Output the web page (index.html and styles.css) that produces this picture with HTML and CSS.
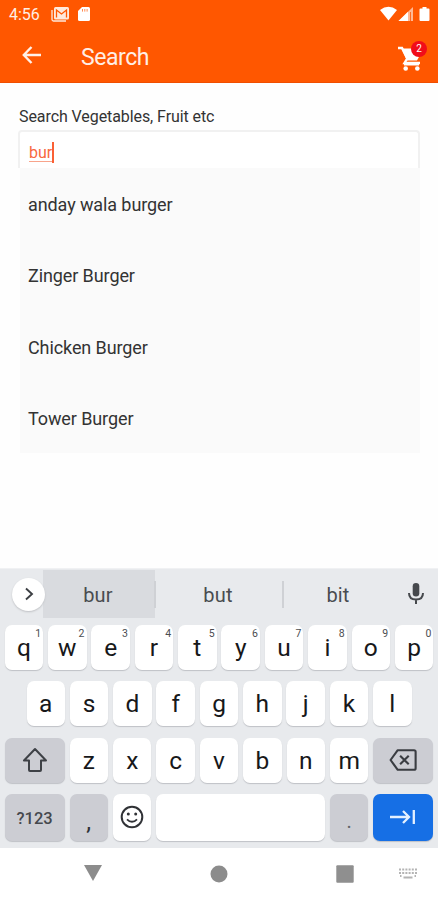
FILE: index.html
```html
<!DOCTYPE html>
<html lang="en">
<head>
<meta charset="utf-8">
<title>Search</title>
<link rel="stylesheet" href="styles.css">
</head>
<body>
<div class="screen">
  <header class="top">
    <div class="status">
      <span class="clock">4:56</span>
      <svg class="i-mail" width="18" height="15" viewBox="0 0 18 15"><path d="M1 3v9.500q0 1.500 1.500 1.500H15" fill="none" stroke="#ffe9dc" stroke-width="1.300"/><rect x="3" y="0" width="15" height="12.500" rx="1.500" fill="#ffe9dc"/><path d="M5.500 10.500V3l5 4 5-4v7.500" fill="none" stroke="#ff5700" stroke-width="1.300"/></svg>
      <svg class="i-sd" width="12" height="14" viewBox="0 0 12 14"><path d="M4 0h6.500Q12 0 12 1.500v11q0 1.500-1.500 1.500h-9Q0 14 0 12.500V4z" fill="#fff"/><path d="M4.500 2v2.600M6.800 2v2.600M9.100 2v2.600" stroke="#ff8a50" stroke-width="1"/></svg>
      <svg class="i-net" width="50" height="16" viewBox="0 0 50 16"><path d="M0 4Q8.500-2.500 17 4L8.500 14.500z" fill="#fff"/><path d="M18.500 15L33 1v14z" fill="#ffb895"/><path d="M18.500 15L28 5.700V15z" fill="#fff"/><path d="M30.500 6v9" stroke="#ff6a20"/><path d="M42.500 1h4v1.500h2q1 0 1 1V14q0 1-1 1h-8q-1 0-1-1V3.500q0-1 1-1h2z" fill="#fff"/></svg>
    </div>
    <div class="bar">
      <svg class="back" width="20" height="18" viewBox="0 0 20 18"><path d="M19 9H2M9.500 1L1.800 9l7.700 8" fill="none" stroke="#fff0e8" stroke-width="2.400"/></svg>
      <h1>Search</h1>
      <div class="cart">
        <svg width="24" height="26" viewBox="0 0 24 26"><path d="M0 2h4l5.200 10.500L6.500 17H22" fill="none" stroke="#fff" stroke-width="2.400"/><path d="M3.500 2.500h12L22 9l-3 5.500H9z" fill="#fff"/><path d="M6 17.500h15v2H6z" fill="#fff"/><circle cx="7.700" cy="22.500" r="2.300" fill="#fff"/><circle cx="19.300" cy="22.500" r="2.300" fill="#fff"/></svg>
        <span class="badge">2</span>
      </div>
    </div>
  </header>

  <main>
    <label>Search Vegetables, Fruit etc</label>
    <div class="field"><span class="typed">bur</span><i class="caret"></i></div>
    <ul class="list">
      <li>anday wala burger</li>
      <li>Zinger Burger</li>
      <li>Chicken Burger</li>
      <li>Tower Burger</li>
    </ul>
  </main>

  <section class="keyboard">
    <div class="suggest">
      <span class="more"><svg width="10" height="14" viewBox="0 0 10 14"><path d="M2 1.500L8 7l-6 5.500" fill="none" stroke="#3c3f43" stroke-width="1.900"/></svg></span>
      <span class="word picked">bur</span>
      <span class="word">but</span>
      <span class="word last">bit</span>
      <svg class="mic" width="16" height="22" viewBox="0 0 16 22"><rect x="4.700" y="0" width="6.600" height="13.500" rx="3.300" fill="#46494d"/><path d="M1 10q0 6.500 7 6.500T15 10M8 16.500V21" fill="none" stroke="#46494d" stroke-width="2"/></svg>
    </div>
    <div class="row">
      <span class="key">q<sup>1</sup></span><span class="key">w<sup>2</sup></span><span class="key">e<sup>3</sup></span><span class="key">r<sup>4</sup></span><span class="key">t<sup>5</sup></span><span class="key">y<sup>6</sup></span><span class="key">u<sup>7</sup></span><span class="key">i<sup>8</sup></span><span class="key">o<sup>9</sup></span><span class="key">p<sup>0</sup></span>
    </div>
    <div class="row inset">
      <span class="key">a</span><span class="key">s</span><span class="key">d</span><span class="key">f</span><span class="key">g</span><span class="key">h</span><span class="key">j</span><span class="key">k</span><span class="key">l</span>
    </div>
    <div class="row">
      <span class="key wide gray"><svg width="26" height="26" viewBox="0 0 26 26"><path d="M13 2L2 13.500h5V23q0 1 1 1h10q1 0 1-1v-9.500h5z" fill="none" stroke="#3e4146" stroke-width="2" stroke-linejoin="round"/></svg></span><span class="key">z</span><span class="key">x</span><span class="key">c</span><span class="key">v</span><span class="key">b</span><span class="key">n</span><span class="key">m</span><span class="key wide gray"><svg class="del" width="28" height="22" viewBox="0 0 29 23"><path d="M9 1.300h17q1.700 0 1.700 1.700v17q0 1.700-1.700 1.700H9L1.500 11.500z" fill="none" stroke="#3a3d42" stroke-width="2.200" stroke-linejoin="round"/><path d="M11.500 7l9 9M20.500 7l-9 9" stroke="#3a3d42" stroke-width="2.200"/></svg></span>
    </div>
    <div class="row">
      <span class="key wide gray sym">?123</span><span class="key gray comma">,</span><span class="key"><svg class="face" width="24" height="24" viewBox="0 0 24 24"><circle cx="12" cy="12" r="10.300" fill="none" stroke="#303236" stroke-width="2"/><circle cx="8.300" cy="9" r="1.500" fill="#303236"/><circle cx="15.700" cy="9" r="1.500" fill="#303236"/><path d="M7 14.300q5 5 10 0" fill="none" stroke="#303236" stroke-width="1.800"/></svg></span><span class="key space"></span><span class="key gray dot">.</span><span class="key wide enter"><svg width="26" height="16" viewBox="0 0 26 16"><path d="M0 8h18M13 2l6 6-6 6M23.800 1v14" fill="none" stroke="#e4f0ff" stroke-width="2.300"/></svg></span>
    </div>
  </section>

  <nav>
    <svg width="18" height="16" viewBox="0 0 18 16"><path d="M0 0h18L9 16z" fill="#8c8c8c"/></svg>
    <svg width="18" height="18" viewBox="0 0 18 18"><circle cx="9" cy="9" r="8.500" fill="#8c8c8c"/></svg>
    <svg width="18" height="18" viewBox="0 0 18 18"><rect x=".3" y=".3" width="17.400" height="17.400" rx="1" fill="#8f8f8f"/></svg>
    <svg width="18" height="12" viewBox="0 0 18 12"><path d="M0 1.500h18M0 5h18" stroke="#b4b4b4" stroke-width="2" stroke-dasharray="2 1.200"/><path d="M1 8h1.500M4.500 9.500h9M15.500 8H17" stroke="#b4b4b4" stroke-width="2"/></svg>
  </nav>
</div>
</body>
</html>
```

FILE: styles.css
```css
* { box-sizing: border-box; }
body { margin: 0; background: #fefefe; font-family: Roboto, sans-serif; color: #333; }
svg { display: block; flex: none; }
.screen { width: 438px; height: 900px; display: flex; flex-direction: column; overflow: hidden; }

.top { height: 83px; background: #ff5700; color: #fff; border-bottom: 1px solid #f04e00; }
.status { height: 28px; display: flex; align-items: center; padding: 0 8px 0 9px; }
.clock { width: 42px; font-size: 16px; line-height: 28px; color: #ffeee5; padding-top: 1px; }
.i-sd { margin-left: 9px; }
.i-net { margin-left: auto; }
.bar { height: 54px; display: flex; align-items: center; padding: 0 12px 0 22px; }
.back { margin-top: 0; }
h1 { margin: 5px 0 0 39px; font-size: 23px; line-height: 30px; font-weight: 400; letter-spacing: -.45px; color: #ffeee5; }
.cart { position: relative; margin: 8px 4px 0 auto; }
.badge { position: absolute; left: 13px; top: -5px; width: 16px; height: 16px; border-radius: 50%; background: #f10c1a; font-size: 10px; line-height: 16px; text-align: center; }

main { height: 485px; padding: 23px 18px 0; }
label { display: block; height: 24px; font-size: 16px; line-height: 21px; letter-spacing: -.08px; padding-left: 1px; }
.field { height: 38px; border: 2px solid #f1f1f1; border-bottom: 0; border-radius: 4px 4px 0 0; background: #fff; display: flex; align-items: flex-start; padding: 10px 0 0 9px; }
.typed { font-size: 16px; line-height: 18px; height: 20px; color: #f8693f; border-bottom: 1px solid #f8a48b; padding-top: 2px; }
.caret { width: 2px; height: 21px; margin: 0; background: #fa6035; }
.list { list-style: none; margin: 0 0 0 2px; padding: 0; background: #fafafa; height: 285px; width: 400px; }
.list li { height: 71.300px; padding: 1px 0 0 8px; font-size: 18px; line-height: 71px; letter-spacing: -.1px; }

.keyboard { height: 280px; background: #e8eaed; border-top: 1px solid #f0f1f3; }
.suggest { height: 56px; display: flex; align-items: center; padding-left: 12px; }
.more { width: 33px; height: 33px; margin: -6px -2px 0 0; border-radius: 50%; background: #fff; box-shadow: 0 1px 2px #bfc1c4; display: flex; align-items: center; justify-content: center; z-index: 1; }
.word { position: relative; width: 120px; height: 48px; margin-bottom: 7px; padding-top: 1px; font-size: 20px; line-height: 48px; text-align: center; color: #494c50; letter-spacing: .2px; }
.word.picked { width: 112px; background: #d9dbdf; margin-right: 4px; padding-right: 2px; }
.word:not(.last)::after { content: ""; position: absolute; right: -1px; top: 11px; width: 2px; height: 27px; background: #cfd1d5; }
.word:nth-child(3) { width: 124px; padding-right: 6px; }
.word.last { width: 112px; padding-right: 2px; }
.mic { margin: -6px 0 0 13px; }
.row { height: 45px; margin: 0 4.700px 11.300px; display: flex; gap: 4.900px; }
.row.inset { margin-left: 26.500px; margin-right: 26.500px; }
.key { position: relative; flex: 1 1 0; height: 45px; border-radius: 7px; background: #fff; box-shadow: 0 1px 1px #bfc1c6; font-size: 24.500px; line-height: 43px; text-align: center; color: #17181a; display: flex; align-items: center; justify-content: center; }
.key sup { position: absolute; right: 2px; top: 3px; font-size: 10.500px; line-height: 12px; color: #4b4d51; }
.wide { flex: 0 0 60px; }
.gray { background: #cccdd3; color: #303237; }
.sym { font-size: 16.500px; font-weight: 500; padding-top: 2px; color: #45484d; }
.comma { padding-top: 9px; }
.dot { padding-top: 9px; color: #62656a; font-size: 20px; }
.space { flex: 0 0 169px; }
.enter { background: #166fe5; }
.row:last-child .key { height: 47px; }

nav { height: 52px; display: flex; align-items: center; padding: 0 20px 0 84px; background: #fff; }
nav svg:nth-child(1) { margin-right: 108px; margin-top: -2px; }
nav svg:nth-child(2) { margin-right: 108px; }
nav svg:nth-child(3) { margin-right: 45px; }
```
